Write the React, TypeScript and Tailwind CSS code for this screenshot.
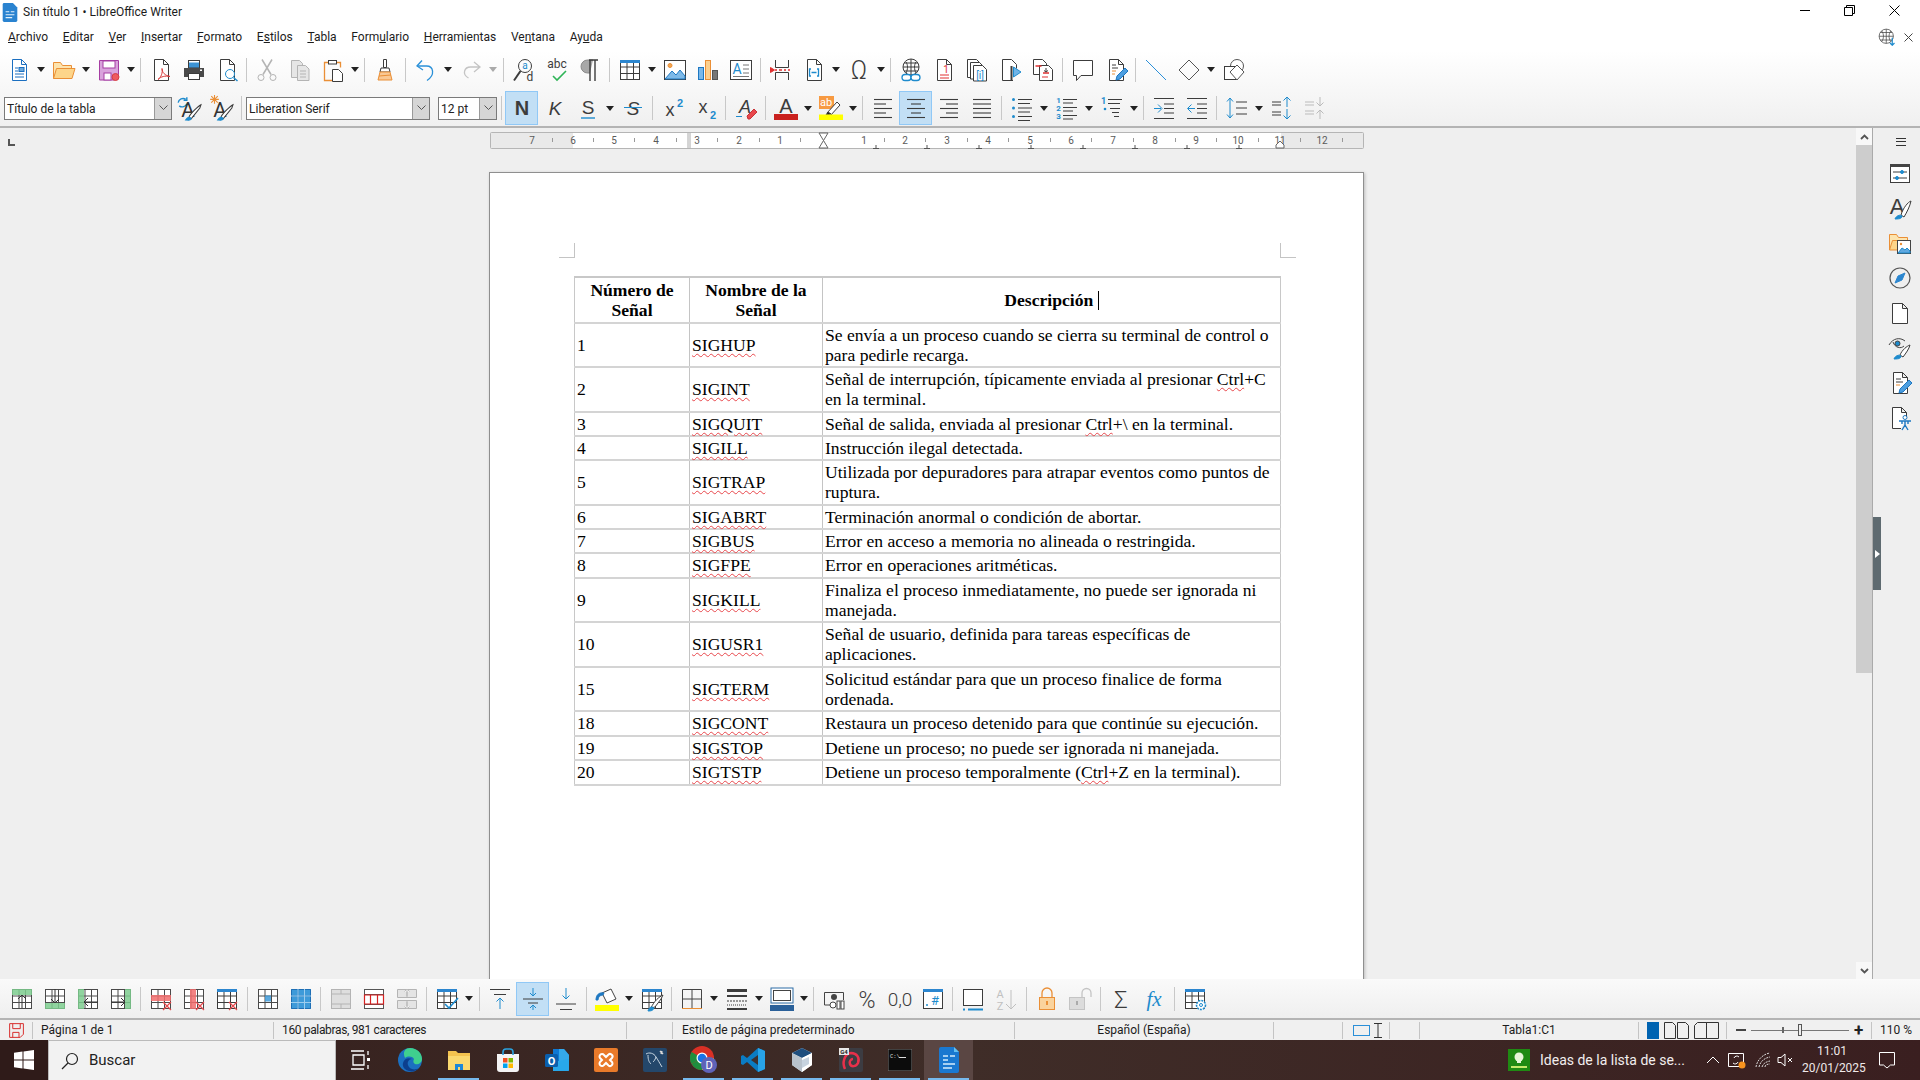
import React from 'react';

const D = '#3c3c3c';
const BL = '#1e8bcd';
const OR = '#ea8f36';
const RD = '#e8474c';
const GY = '#b4b4b4';

type P = { children?: React.ReactNode; s?: number };

const Svg = ({ children, s = 24 }: P) => (
  <svg width={s} height={s} viewBox="0 0 24 24" fill="none" stroke={D} strokeWidth="1" className="shrink-0 overflow-visible">
    {children}
  </svg>
);

const Tx = ({ x, y, z, c = D, b, i, w, f = 'Roboto', children }: { x: number; y: number; z: number; c?: string; b?: boolean; i?: boolean; w?: number; f?: string; children: React.ReactNode }) => (
  <text x={x} y={y} fontSize={z} fill={c} stroke="none" fontWeight={w ?? (b ? 700 : 400)} fontStyle={i ? 'italic' : 'normal'} fontFamily={f} textAnchor="middle">
    {children}
  </text>
);

const Doc = ({ c = D }: { c?: string }) => <path d="M5.5 1.5h9l5 5v16h-14zM14.5 1.5v5h5" stroke={c} fill="#fff" />;

const Btn = ({ children, on }: { children: React.ReactNode; on?: boolean }) => (
  <div className={`w-[33px] h-[34px] shrink-0 flex items-center justify-center ${on ? 'bg-[#c2dff5] border border-[#90c8f6]' : ''}`}>{children}</div>
);
const Arrow = ({ off }: { off?: boolean }) => (
  <div className="w-[12px] shrink-0 flex justify-center">
    <div className={`w-0 h-0 border-l-[4px] border-r-[4px] border-t-[5px] border-l-transparent border-r-transparent ${off ? 'border-t-[#aaa]' : 'border-t-[#222]'}`} />
  </div>
);
const Sep = ({ w = 'w-[7px]' }: { w?: string }) => (
  <div className={`${w} shrink-0 flex justify-center`}>
    <div className="w-px h-[24px] bg-[#c8c8c8]" />
  </div>
);

// toolbar one
const NewDoc = () => (
  <Svg>
    <Doc c="#1b6fc0" />
    <path d="M8 10h3M8 13h3M8 16h9M8 19h9" stroke="#1b6fc0" />
    <rect x="12" y="9.5" width="5" height="4" fill="#6aa9dd" stroke="#1b6fc0" />
  </Svg>
);
const Open = () => (
  <Svg>
    <path d="M1.5 20.5V4.5h7l2 3h9v3" stroke={OR} fill="#fde4ae" />
    <path d="M1.5 20.5l3-10h18.500l-3 10z" stroke={OR} fill="#fdd58a" />
  </Svg>
);
const Save = () => (
  <Svg>
    <path d="M2.500 2.500h19v14l-4 5.500h-15z" fill="#d9a3dc" stroke="#a63ea3" />
    <rect x="6" y="3" width="12" height="7" fill="#fff" stroke="#a63ea3" />
    <rect x="7" y="15" width="7" height="7" fill="#fff" stroke="#a63ea3" />
    <circle cx="18.500" cy="19" r="3.500" fill="#ee5a5f" stroke="#d63d42" />
  </Svg>
);
const Pdf = () => (
  <Svg>
    <Doc />
    <path d="M9 21.500c3-2 5-7 4-11 0 4 3 7 8 8-5-1-9 0-12 3z" stroke="#d93b3b" fill="#fff" />
  </Svg>
);
const Print = () => (
  <Svg>
    <rect x="6.500" y="2.500" width="11" height="7" fill="#fff" stroke={D} />
    <path d="M7 4.500h10v5H7z" fill="#3c93d4" stroke="none" />
    <path d="M2 10h20v9H2z" fill="#4a4a4a" stroke="none" />
    <rect x="6.500" y="15.500" width="11" height="6" fill="#fff" stroke={D} />
    <rect x="18" y="11.500" width="2" height="1.500" fill="#fff" stroke="none" />
  </Svg>
);
const Preview = () => (
  <Svg>
    <Doc />
    <circle cx="15" cy="16" r="4.500" fill="#fff" stroke={BL} />
    <path d="M18.500 19.500l4 3.500" stroke={BL} strokeWidth="1.500" />
  </Svg>
);
const Cut = () => (
  <Svg>
    <path d="M7 1.500l9 15M17 1.500l-9 15" stroke={GY} strokeWidth="1.500" />
    <circle cx="6" cy="19.500" r="3" stroke={GY} />
    <circle cx="18" cy="19.500" r="3" stroke={GY} />
  </Svg>
);
const Copy = () => (
  <Svg>
    <path d="M3.500 2.500h8l3 3v14h-11z" fill="#e6e6e6" stroke={GY} />
    <path d="M9.500 7.500h8l3.500 3.500v11.500h-11.500z" fill="#e6e6e6" stroke={GY} />
    <path d="M12 13h6M12 16h6M12 19h6" stroke={GY} />
  </Svg>
);
const Paste = () => (
  <Svg>
    <path d="M7 4.500H3.500v18h8M16 4.500h3.500v5" stroke={OR} strokeWidth="1.300" />
    <rect x="7.500" y="2.500" width="8" height="3.500" stroke={D} fill="#fff" />
    <path d="M11.500 11.500h6l4 4v8h-10z" stroke={D} fill="#fff" />
  </Svg>
);
const Clone = () => (
  <Svg>
    <path d="M10.500 1.500h3v8h-3zM8 10h8l1 4H7z" fill="#fff" stroke={D} />
    <path d="M7 14h10l2 8H5z" fill="#f9c894" stroke={OR} />
    <path d="M6 18l12-1" stroke={OR} />
  </Svg>
);
const Undo = ({ c = '#2a90d8' }: { c?: string }) => (
  <Svg>
    <path d="M8 2.500L3 8l6 4" stroke={c} strokeWidth="1.300" />
    <path d="M3.500 8h9c7 0 9 9 .5 14.500" stroke={c} strokeWidth="1.300" />
  </Svg>
);
const Redo = () => (
  <svg width="24" height="24" viewBox="0 0 24 24" fill="none" className="-scale-x-100 shrink-0">
    <path d="M9 4L3 9l6 5M3.500 9h9c6 0 9 7 2 11" stroke="#c4c4c4" strokeWidth="1.300" />
  </svg>
);
const Find = () => (
  <Svg>
    <circle cx="13" cy="8" r="6.500" />
    <path d="M8.500 13L2 22.500" strokeWidth="2" />
    <Tx x={13} y={11} z={10} c={BL}>a</Tx>
    <Tx x={18} y={23} z={12}>d</Tx>
  </Svg>
);
const Abc = () => (
  <Svg>
    <Tx x={12} y={10} z={12}>abc</Tx>
    <path d="M8 18l4 4 9-9" stroke="#2fb457" strokeWidth="1.600" />
  </Svg>
);
const Pilcrow = () => (
  <Svg>
    <path d="M15 2H9.500a6 6 0 000 13H12" fill="#a8a8a8" stroke="#8a8a8a" />
    <path d="M12 2v21M17 2v21M11 2h9" strokeWidth="1.400" />
  </Svg>
);
const Grid = ({ head = true, c = D }: { head?: boolean; c?: string }) => (
  <>
    <rect x="2.500" y="2.500" width="19" height="19" stroke={c} fill="#fff" />
    <path d="M2.500 9h19M2.500 15.500h19M9 2.500v19M15.500 2.500v19" stroke={c} />
    {head && <rect x="2" y="2" width="20" height="3" fill="#2c86cf" stroke="none" />}
  </>
);
const TableI = () => <Svg><Grid /></Svg>;
const ImageI = () => (
  <Svg>
    <rect x="1.500" y="2.500" width="21" height="19" fill="#fff" />
    <circle cx="7" cy="7.500" r="2" fill="#f5a650" stroke={OR} />
    <path d="M2 21l7-8 4 4 4-5 5 6v3z" fill="#7db9e8" stroke="#1e78c2" />
  </Svg>
);
const Chart = () => (
  <Svg>
    <rect x="2.500" y="9.500" width="5" height="12" fill="#79b8ea" stroke="#1e78c2" />
    <rect x="9.500" y="2.500" width="5" height="19" fill="#fcd08f" stroke={OR} />
    <rect x="16.500" y="12.500" width="5" height="9" fill="#777" stroke="#555" />
  </Svg>
);
const TextBox = () => (
  <Svg>
    <rect x="1.500" y="2.500" width="21" height="19" fill="#fff" />
    <Tx x={8} y={16} z={14} c={BL}>A</Tx>
    <path d="M14 7h6M14 11h6M14 15h6M4 18.500h16" stroke="#777" />
  </Svg>
);
const PageBreak = () => (
  <Svg>
    <path d="M6.500 2v7.500h13V2M6.500 22v-7.500h13V22" />
    <path d="M6 12h2M10 12h3M15 12h2M19 12h2" stroke="#e03131" strokeWidth="1.400" />
    <path d="M1.500 9.500l4 2.500-4 2.500z" fill="#e03131" stroke="#e03131" />
  </Svg>
);
const Field = () => (
  <Svg>
    <Doc />
    <path d="M9 11H7.500v7H9M15 11h1.500v7H15" stroke={BL} strokeWidth="1.300" />
    <path d="M9.500 14.500h5" stroke={BL} strokeWidth="1.500" />
  </Svg>
);
const Omega = () => <Svg><Tx x={12} y={21} z={25} w={300}>Ω</Tx></Svg>;
const Link = () => (
  <Svg>
    <circle cx="12" cy="9" r="8" />
    <path d="M4 9h16M12 1v16M7 4c2 3 2 7 0 11M17 4c-2 3-2 7 0 11M5 5h14M5 13h14" />
    <rect x="3" y="16.500" width="9" height="6" rx="3" fill="#fff" stroke={BL} strokeWidth="1.300" />
    <rect x="12" y="16.500" width="9" height="6" rx="3" fill="#fff" stroke={BL} strokeWidth="1.300" />
  </Svg>
);
const Footnote = () => (
  <Svg>
    <Doc />
    <Tx x={14} y={15} z={10} c="#e03131">1</Tx>
    <path d="M8 17h9M8 20h9" stroke="#e03131" />
  </Svg>
);
const Endnote = () => (
  <Svg>
    <path d="M2.500 1.500h9l3 3v15h-12z" fill="#fff" />
    <path d="M5.500 4.500h9l3 3v13.500h-12z" fill="#fff" />
    <path d="M8.500 7.500h9l4 4v11.500h-13z" fill="#fff" />
    <Tx x={15} y={21} z={10} c={BL}>[i]</Tx>
  </Svg>
);
const Bookmark = () => (
  <Svg>
    <path d="M15 22.500H4.500v-21h9l5 5v4" fill="#fff" />
    <path d="M13.500 8v15" strokeWidth="2" />
    <path d="M15.500 9l7.500 5-7.500 5z" fill="#6fb4e8" stroke={BL} />
  </Svg>
);
const CrossRef = () => (
  <Svg>
    <path d="M2.500 1.500h9l4 4v11h-13z" fill="#fff" />
    <path d="M8.500 7.500h9l4 4v11h-13z" fill="#fff" />
    <path d="M4.500 8h6M12 15h6" stroke="#e03131" strokeWidth="1.300" />
    <path d="M15 10v4l-2-1.500M15 14l2-1.500" />
    <path d="M11 19h6" stroke="#e03131" />
  </Svg>
);
const Comment = () => (
  <Svg>
    <path d="M2.500 2.500h19v15H10l-4.500 5v-5h-3z" fill="#fff" />
  </Svg>
);
const Track = () => (
  <Svg>
    <Doc />
    <path d="M8 7h4M8 10h6" />
    <path d="M8 13h4M8 16h3" stroke={OR} />
    <path d="M12 22l1-4 8-8 3 3-8 8z" fill="#4c9ee0" stroke="#1e78c2" />
  </Svg>
);
const LineI = () => <Svg><path d="M2 2l20 20" stroke="#2a8fd8" /></Svg>;
const Diamond = () => <Svg><path d="M12 2l10 10-10 10L2 12z" stroke="#555" /></Svg>;
const Shapes = () => (
  <Svg>
    <circle cx="15" cy="8" r="6.500" fill="#fff" stroke="#555" />
    <rect x="2.500" y="8.500" width="12" height="13" fill="#fff" />
    <path d="M15 7l7 7-7 8-7-8z" fill="#fff" stroke="#555" />
  </Svg>
);

// toolbar two
const StyleA = ({ star }: { star?: boolean }) => (
  <Svg s={26}>
    {star ? (
      <path d="M6 0v8M2 4h8M3 1l6 6M9 1L3 7" stroke={OR} />
    ) : (
      <path d="M2 7a4.500 4.500 0 017-3M10 2v3H7M10 8a4.500 4.500 0 01-7 2" stroke={BL} strokeWidth="1.300" />
    )}
    <Tx x={11} y={20} z={19} c="#333">A</Tx>
    <path d="M12 21c0-3 9-11 11-12l-1 3-8 10z" fill="#fff" />
    <path d="M9 23c2-3 4-3 5-1-1 2-3 1-5 1z" fill={BL} stroke={BL} />
  </Svg>
);
const Combo = ({ w, text }: { w: string; text: string }) => (
  <div className={`${w} h-[23px] border border-[#7a7a7a] bg-white flex items-center shrink-0`}>
    <span className="flex-1 pl-[2px] pt-[1px] text-[12px] text-[#222] whitespace-nowrap overflow-hidden">{text}</span>
    <div className="w-[17px] h-full bg-[#d6d6d6] border-l border-[#9a9a9a] flex items-center justify-center">
      <svg width="9" height="6" viewBox="0 0 9 6" fill="none" stroke="#555"><path d="M.5.5l4 4 4-4" /></svg>
    </div>
  </div>
);
const Bold = () => <Svg><Tx x={12} y={19} z={20} b f="Liberation Sans">N</Tx></Svg>;
const Ital = () => <Svg><Tx x={12} y={19} z={19} i f="Liberation Sans">K</Tx></Svg>;
const Under = () => (
  <Svg>
    <Tx x={12} y={18} z={19} f="Liberation Sans">S</Tx>
    <path d="M5 22h14" stroke={BL} strokeWidth="1.400" />
  </Svg>
);
const Strike = () => (
  <Svg>
    <Tx x={12} y={19} z={19} i f="Liberation Sans">S</Tx>
    <path d="M3 11.500h18" stroke={BL} />
  </Svg>
);
const Sup = () => (
  <Svg>
    <Tx x={9} y={20} z={18} f="Liberation Sans">x</Tx>
    <Tx x={19} y={11} z={11} c={BL} b f="Liberation Sans">2</Tx>
  </Svg>
);
const Sub = () => (
  <Svg>
    <Tx x={9} y={17} z={18} f="Liberation Sans">x</Tx>
    <Tx x={19} y={23} z={11} c={BL} b f="Liberation Sans">2</Tx>
  </Svg>
);
const Clear = () => (
  <Svg>
    <Tx x={11} y={17} z={18} i f="Liberation Sans">A</Tx>
    <path d="M2 20.500h6" stroke={BL} />
    <path d="M13 20l7-7 3 3-7 7h-2z" fill={RD} stroke="#c93236" />
  </Svg>
);
const FontColor = () => (
  <Svg>
    <Tx x={12} y={17} z={20} f="Liberation Sans">A</Tx>
    <rect x="0" y="18" width="24" height="6" fill="#c9211e" stroke="none" />
  </Svg>
);
const Highlight = () => (
  <Svg>
    <rect x="0" y="0" width="15" height="13" fill="#f79a42" stroke="none" />
    <Tx x={7} y={10} z={11} c="#fff">ab</Tx>
    <path d="M8 17l10-11 3 3-10 11z" fill="#fff" />
    <path d="M7 19l2-3 3 2z" fill="#222" />
    <rect x="0" y="18.500" width="24" height="5.500" fill="#ffff00" stroke="none" />
  </Svg>
);
const Lines = ({ l, c = D }: { l: [number, number, number][]; c?: string }) => (
  <Svg>
    {l.map(([a, b, y]) => (
      <path key={`${a}${b}${y}`} d={`M${a} ${y}H${b}`} stroke={c} strokeWidth="1.100" />
    ))}
  </Svg>
);
const AlignL = () => <Lines l={[[3, 21, 3.5], [3, 15, 8], [3, 21, 12.5], [3, 15, 17], [3, 21, 21.5]]} />;
const AlignC = () => <Lines l={[[3, 21, 3.5], [7, 17, 8], [3, 21, 12.5], [7, 17, 17], [3, 21, 21.5]]} />;
const AlignR = () => <Lines l={[[3, 21, 3.5], [9, 21, 8], [3, 21, 12.5], [9, 21, 17], [3, 21, 21.5]]} />;
const AlignJ = () => <Lines l={[[3, 21, 3.5], [3, 21, 8], [3, 21, 12.5], [3, 21, 17], [3, 21, 21.5]]} />;
const Bullets = () => (
  <Svg>
    {[3.5, 12, 20.5].map((y) => (
      <g key={y}>
        <circle cx="3.500" cy={y} r="1.500" fill={BL} stroke="none" />
        <path d={`M8 ${y}H22M8 ${y + 4}H20`} />
      </g>
    ))}
  </Svg>
);
const Numbers = () => (
  <Svg>
    {['1', '2', '3'].map((n, i) => (
      <g key={n}>
        <Tx x={3.5} y={7 + i * 8} z={8} c={BL} b>{n}</Tx>
        <path d={`M8 ${3.5 + i * 8}H22M8 ${7 + i * 8}H18`} />
      </g>
    ))}
  </Svg>
);
const Outline = () => (
  <Svg>
    <Tx x={3.5} y={8} z={9} c={BL} b>1</Tx>
    <circle cx="5" cy="13" r="1.300" fill={BL} stroke="none" />
    <path d="M8 3.500H22M8 7.500H20M10 12.500H20M12 16.500H19M14 20.500H19" />
  </Svg>
);
const Indent = () => (
  <Svg>
    <path d="M2 2.500h20M2 22.500h20M12 8h10M12 12.500h10M12 17h10" />
    <path d="M2 12.500h7M6 8.500l4 4-4 4" stroke={BL} />
  </Svg>
);
const Outdent = () => (
  <Svg>
    <path d="M2 2.500h20M2 22.500h20M12 8h10M12 12.500h10M12 17h10" />
    <path d="M10 12.500H3M6.500 8.500l-4 4 4 4" stroke={BL} />
  </Svg>
);
const Spacing = () => (
  <Svg>
    <path d="M5 2v20M2 5.500L5 2l3 3.500M2 18.500L5 22l3-3.500" stroke={BL} />
    <path d="M11 6h11M11 12h11M11 18h11" />
  </Svg>
);
const IncSp = ({ c = D, a = BL }: { c?: string; a?: string }) => (
  <Svg>
    <path d="M2 6h9M2 9h9M2 16h9M2 19h9" stroke={c} />
    <path d="M17 11V1M13.500 4.500L17 1l3.500 3.500M17 13v10M13.500 19.500L17 23l3.500-3.500" stroke={a} />
  </Svg>
);
const DecSp = () => (
  <Svg>
    <path d="M2 6h9M2 9h9M2 15h9M2 18h9" stroke="#bbb" />
    <path d="M17 10V1M13.500 6.500L17 10l3.500-3.500M17 14v9M13.500 17.500L17 14l3.500 3.500" stroke="#bbb" />
  </Svg>
);

// table toolbar
const GridIn = ({ fill, x, y, w, h, children }: { fill: string; x: number; y: number; w: number; h: number; children?: React.ReactNode }) => (
  <Svg>
    <rect x="2" y="2" width="20" height="20" fill="#fff" stroke="none" />
    <Grid head={false} c="#4a4a4a" />
    <rect x={x} y={y} width={w} height={h} fill={fill} fillOpacity="0.85" stroke="none" />
    {children}
  </Svg>
);
const X = () => <path d="M14 15l8 8M22 15l-8 8" stroke={RD} strokeWidth="1.200" />;
const RowsAbove = () => <GridIn fill="#7ccc8e" x={2} y={2} w={20} h={6}><path d="M12 21V8M8 12l4-4 4 4" stroke="#333" /></GridIn>;
const RowsBelow = () => <GridIn fill="#7ccc8e" x={2} y={16} w={20} h={6}><path d="M12 2v14M8 12l4 4 4-4" stroke="#333" /></GridIn>;
const ColsLeft = () => <GridIn fill="#7ccc8e" x={2} y={2} w={6} h={20}><path d="M22 15H8M12 11l-4 4 4 4" stroke="#333" /></GridIn>;
const ColsRight = () => <GridIn fill="#7ccc8e" x={16} y={2} w={6} h={20}><path d="M2 15h14M12 11l4 4-4 4" stroke="#333" /></GridIn>;
const DelRow = () => <GridIn fill="#f26d6d" x={2} y={8} w={20} h={6}><X /></GridIn>;
const DelCol = () => <GridIn fill="#f26d6d" x={8} y={2} w={6} h={20}><X /></GridIn>;
const DelTab = () => <Svg><Grid /><X /></Svg>;
const SelCell = () => <GridIn fill="#3d9ad9" x={9} y={8.5} w={6} h={6} />;
const SelAll = () => (
  <Svg>
    <rect x="2" y="2" width="20" height="20" fill="#3d9ad9" stroke="none" />
    <path d="M2.500 2.500h19v19h-19zM2.500 9h19M2.500 15.500h19M9 2.500v19M15.500 2.500v19" stroke="#1f6fb5" />
    <path d="M2 9h20M2 15.500h20M9 2v20M15.500 2v20" stroke="#9ccdee" />
  </Svg>
);
const Merge = () => (
  <Svg>
    <rect x="2.500" y="2.500" width="19" height="19" fill="#dedede" stroke={GY} />
    <path d="M2.500 7h19M2.500 17h19M12 2.500V7M12 17v4.500" stroke={GY} />
  </Svg>
);
const SplitT = () => (
  <Svg>
    <rect x="2.500" y="2.500" width="19" height="19" fill="#fff" stroke="#555" />
    <path d="M2.500 7.500h19M2.500 17.500h19" stroke="#555" />
    <path d="M2.500 8h19v9h-19zM8.500 8v9M15.500 8v9" stroke="#d82020" strokeWidth="1.200" />
  </Svg>
);
const SplitTab = () => (
  <Svg>
    <path d="M2.500 2.500h19v8h-19zM2.500 13.500h19v8h-19zM12 2.500v8M12 13.500v8" stroke={GY} fill="#e4e4e4" />
    <path d="M12 9V2M9.500 4.500L12 2l2.500 2.500M12 15v7M9.500 19.500L12 22l2.500-2.500" stroke="#bbb" fill="#fff" />
  </Svg>
);
const Autofmt = () => (
  <Svg>
    <Grid />
    <path d="M10 17l4 4 9-10" stroke={BL} strokeWidth="1.600" />
  </Svg>
);
const VTop = () => (
  <Svg>
    <path d="M2 2.500h20M6 7.500h12" />
    <path d="M12 22V11M8.500 14.500L12 11l3.500 3.500" stroke={BL} />
  </Svg>
);
const VMid = () => (
  <Svg>
    <path d="M2 12h20M7 16h10" />
    <path d="M12 1v8M9 6l3 3 3-3M12 23v-5M9 21l3-3 3 3" stroke={BL} />
  </Svg>
);
const VBot = () => (
  <Svg>
    <path d="M2 17h20M6 22.500h12" />
    <path d="M12 1v11M8.500 8.500L12 12l3.500-3.500" stroke={BL} />
  </Svg>
);
const Bucket = () => (
  <Svg>
    <path d="M7 6l9-4 5 10-9 4z" fill="#fff" stroke="#444" />
    <path d="M1 13c0-5 3-8 8-7l-1 2C5 8 3 10 3 13z" fill="#1e78c2" stroke="#1e78c2" />
    <rect x="0" y="18" width="24" height="6" fill="#ffff00" stroke="none" />
  </Svg>
);
const TabStyle = () => (
  <Svg>
    <Grid />
    <path d="M11 21c3-7 8-11 12-13l-2 4-6 8z" fill="#fff" />
    <path d="M8 24c1-4 4-5 6-3-1 3-4 3-6 3z" fill={BL} stroke={BL} />
  </Svg>
);
const Borders = () => (
  <Svg>
    <path d="M2.500 2.500h19v19M12 2.500v19M2.500 12h19M2.500 2.500v19" stroke="#444" />
    <path d="M2 21.500h20" stroke={OR} />
  </Svg>
);
const BorderSt = () => (
  <Svg>
    <path d="M2 3.500h20" strokeWidth="3" />
    <path d="M2 9h20" strokeWidth="2" />
    <path d="M2 14h20" strokeDasharray="2 1" />
    <path d="M2 18h20" strokeDasharray="1 1" />
    <path d="M2 22h20" strokeWidth="2" />
  </Svg>
);
const BorderCol = () => (
  <Svg>
    <rect x="1" y="1" width="22" height="15" fill="#fff" stroke="#2c6ca6" />
    <rect x="3.500" y="3.500" width="17" height="10" fill="#fff" stroke="#444" />
    <rect x="0" y="18" width="24" height="6" fill="#2a6099" stroke="none" />
  </Svg>
);
const Currency = () => (
  <Svg>
    <path d="M8 18H2.500V5.500h19V13" stroke="#444" />
    <circle cx="12" cy="10" r="3" fill="#444" stroke="none" />
    <circle cx="11" cy="18" r="3" fill="#fff" stroke="#444" />
    <rect x="15" y="14" width="3" height="8" fill="#fff" stroke="#444" />
    <rect x="19" y="14" width="3" height="8" fill="#fff" stroke="#444" />
  </Svg>
);
const Percent = () => <Svg><Tx x={12} y={21} z={23} w={300}>%</Tx></Svg>;
const Decimal = () => <Svg><Tx x={12} y={19} z={19} w={300}>0,0</Tx></Svg>;
const NumFmt = () => (
  <Svg>
    <rect x="2.500" y="2.500" width="19" height="19" fill="#fff" />
    <rect x="2" y="2" width="20" height="3" fill="#2c86cf" stroke="none" />
    <Tx x={14} y={18} z={13} c={BL}>#</Tx>
    <circle cx="6" cy="18" r="1" fill={BL} stroke="none" />
  </Svg>
);
const Caption = () => (
  <Svg>
    <rect x="2.500" y="2.500" width="19" height="16" fill="#fff" />
    <path d="M2 22.500h2M7 22.500h15" stroke={BL} strokeWidth="2" />
  </Svg>
);
const Sort = () => (
  <Svg>
    <Tx x={6} y={11} z={11} c="#c0c0c0">A</Tx>
    <Tx x={6} y={23} z={11} c="#c0c0c0">Z</Tx>
    <path d="M17 3v19M12 17l5 5 5-5" stroke="#c0c0c0" />
  </Svg>
);
const Lock = () => (
  <Svg>
    <path d="M7 11V6a5 5 0 0110 0v5" stroke={OR} strokeWidth="1.300" />
    <rect x="4.500" y="10.500" width="15" height="12" fill="#fad39d" stroke={OR} />
    <path d="M12 14v4" stroke={OR} strokeWidth="2" />
  </Svg>
);
const Unlock = () => (
  <Svg>
    <path d="M14 10V6a4.500 4.500 0 019 0v4" stroke="#c4c4c4" strokeWidth="1.300" />
    <rect x="1.500" y="10.500" width="15" height="12" fill="#dcdcdc" stroke="#c4c4c4" />
    <path d="M9 14v4" stroke="#aaa" strokeWidth="2" />
  </Svg>
);
const Sigma = () => <Svg><Tx x={12} y={21} z={24} w={300}>Σ</Tx></Svg>;
const Fx = () => <Svg><Tx x={12} y={19} z={21} c={BL} i f="Liberation Serif">fx</Tx></Svg>;
const TabProps = () => (
  <Svg>
    <Grid />
    <circle cx="18" cy="18" r="4.500" fill="#fff" stroke={BL} strokeDasharray="2 1" strokeWidth="1.600" />
    <circle cx="18" cy="18" r="1.500" stroke={BL} />
  </Svg>
);

// sidebar
const SideProps = () => (
  <Svg>
    <rect x="2.500" y="3.500" width="19" height="18" fill="#fff" />
    <rect x="2" y="3" width="20" height="3" fill="#444" stroke="none" />
    <path d="M5 11h14M5 17h14" />
    <circle cx="14" cy="11" r="1.500" fill={BL} stroke={BL} />
    <circle cx="9" cy="17" r="1.500" fill={BL} stroke={BL} />
  </Svg>
);
const SideStyles = () => (
  <Svg>
    <Tx x={9} y={18} z={22} f="Liberation Sans">A</Tx>
    <path d="M13 19c2-7 7-13 10-14-1 5-4 11-7 16z" fill="#fff" />
    <path d="M7 23c1-3 5-5 7-3 0 3-4 3-7 3z" fill={BL} stroke={BL} />
  </Svg>
);
const SideGallery = () => (
  <Svg>
    <path d="M1.500 19V3.500h7l2 3h9v3" stroke={OR} fill="#fde4ae" />
    <path d="M1.500 19l3-9.500h18l-3 9.500z" stroke={OR} fill="#fdd58a" />
    <rect x="9.500" y="9.500" width="13" height="13" fill="#fff" stroke="#444" />
    <circle cx="13" cy="13" r="1.200" fill={OR} stroke="none" />
    <path d="M10 22l4-5 3 2 2-2 3 3v2z" fill="#5fa8e0" stroke={BL} />
  </Svg>
);
const SideNav = () => (
  <Svg>
    <circle cx="12" cy="12" r="10" stroke="#555" strokeWidth="1.200" />
    <path d="M17 7l-3 7-7 3 3-7z" fill="#2c86cf" stroke="#2c86cf" />
  </Svg>
);
const SidePage = () => <Svg><path d="M4.500 2.500h10l5 5v15h-15zM14.500 2.500v5h5" fill="#fff" /></Svg>;
const SideEye = () => (
  <Svg>
    <path d="M1 9c4-7 11-8 16-4M5 6c2 6 8 7 11 4" stroke="#444" />
    <circle cx="9.500" cy="7.500" r="2.500" fill={BL} stroke="#444" />
    <path d="M12 19c2-5 7-9 10-10-1 4-4 8-7 12z" fill="#fff" />
    <path d="M6 23c1-3 5-5 7-3 0 3-4 3-7 3z" fill={BL} stroke={BL} />
  </Svg>
);
const SideCheck = () => <Svg><Doc /><path d="M8 8h5M8 11h7" /><path d="M8 14h4" stroke={OR} /><path d="M11 22l1-4 9-9 3 3-9 9z" fill="#4c9ee0" stroke="#1e78c2" /></Svg>;
const SideAcc = () => (
  <Svg>
    <path d="M13 22.500H4.500v-21h9l5 5v4M13.500 1.500v5h5" fill="#fff" />
    <circle cx="17" cy="11.500" r="2" stroke="#1e78c2" />
    <path d="M11 15h12M17 15v4l-3 5M17 19l3 5M14 15v3M20 15v3" stroke="#1e78c2" strokeWidth="1.400" />
  </Svg>
);

// taskbar
const WinLogo = () => (
  <svg width="20" height="20" viewBox="0 0 20 20" fill="#fff"><path d="M0 2.800L8.500 1.600v8H0zM9.500 1.500L20 0v9.600H9.500zM0 10.500h8.500v8L0 17.300zM9.500 10.500H20V20L9.500 18.500z" /></svg>
);
const TaskI = ({ children, on, bar = true }: { children: React.ReactNode; on?: boolean; bar?: boolean }) => (
  <div className={`w-[49px] h-full shrink-0 flex items-center justify-center relative ${on ? 'bg-[#5a4643]' : ''}`}>
    {children}
    {bar && <div className="absolute bottom-0 left-[4px] right-[4px] h-[2px] bg-[#76b9ed]" />}
  </div>
);
const TaskView = () => (
  <svg width="22" height="20" viewBox="0 0 22 20" fill="none" stroke="#fff" strokeWidth="1.300">
    <path d="M1 1h13M1 19h13M3 5h11v10H3zM18 1v4M18 15v4" />
    <rect x="17" y="8" width="3" height="3" fill="#fff" stroke="none" />
  </svg>
);
const Edge = () => (
  <svg width="24" height="24" viewBox="0 0 24 24">
    <circle cx="12" cy="12" r="12" fill="#1b6fc0" />
    <path d="M12 0c7 0 12 5 12 11 0 4-4 6-7 5-2-1-2-3-1-5-2-3-6-3-9-1C4 3 8 0 12 0z" fill="#3fcf8e" />
    <path d="M5 15c1-4 5-6 9-4-3 0-5 3-4 6 1 4 6 6 11 3-3 3-7 4-10 3-4-1-7-4-6-8z" fill="#0c3f8e" />
  </svg>
);
const Explorer = () => (
  <svg width="22" height="22" viewBox="0 0 22 22">
    <path d="M0 2h8l2 2h12v17H0z" fill="#f4c34f" />
    <path d="M0 7h22v14H0z" fill="#fbd96f" />
    <path d="M7 21v-6h8v6h-3v-3h-2v3z" fill="#1e88d8" />
  </svg>
);
const Store = () => (
  <svg width="24" height="24" viewBox="0 0 24 24">
    <path d="M1 6h22v15a3 3 0 01-3 3H4a3 3 0 01-3-3z" fill="#f4f4f4" />
    <path d="M7 7V4a3 3 0 013-3h4a3 3 0 013 3v3" fill="none" stroke="#2aa3e0" strokeWidth="1.600" />
    <rect x="7" y="10" width="4.500" height="4.500" fill="#f25022" />
    <rect x="12.500" y="10" width="4.500" height="4.500" fill="#7fba00" />
    <rect x="7" y="15.500" width="4.500" height="4.500" fill="#00a4ef" />
    <rect x="12.500" y="15.500" width="4.500" height="4.500" fill="#ffb900" />
  </svg>
);
const Outlook = () => (
  <svg width="24" height="24" viewBox="0 0 24 24">
    <path d="M8 1h11l5 6v15a1 1 0 01-1 1H8z" fill="#0f78d4" />
    <path d="M14 1h5l5 6v6H14z" fill="#35a8ea" />
    <path d="M8 14l16-3v11a1 1 0 01-1 1H8z" fill="#28a8ea" />
    <rect x="0" y="6" width="13" height="13" rx="1.500" fill="#0a5fad" />
    <text x="6.500" y="16.500" fontSize="11" fontWeight="700" fill="#fff" textAnchor="middle" fontFamily="Roboto">O</text>
  </svg>
);
const Xampp = () => (
  <svg width="24" height="24" viewBox="0 0 24 24">
    <rect width="24" height="24" rx="2" fill="#e97a2a" />
    <path d="M8 6a2.500 2.500 0 00-2 4l2 2-2 2a2.500 2.500 0 104 3l2-2 2 2a2.500 2.500 0 104-3l-2-2 2-2a2.500 2.500 0 10-4-3l-2 2-2-2a2.500 2.500 0 00-2-1z" fill="#e97a2a" stroke="#fff" strokeWidth="2" />
  </svg>
);
const Mysql = () => (
  <svg width="24" height="24" viewBox="0 0 24 24" fill="none">
    <rect width="24" height="24" rx="2" fill="#24476b" />
    <path d="M3 6c3-2 8-1 10 3 2 3 3 5 6 10M5 7c0 5 1 7 3 9M13 9c-1 3-2 4-3 5" stroke="#c8d6e2" strokeWidth="1" />
    <path d="M17 3l3 3M19 3l-1 3" stroke="#d8d8d8" strokeWidth="1.500" />
  </svg>
);
const Chrome = () => (
  <svg width="28" height="28" viewBox="0 0 28 28">
    <circle cx="12" cy="12" r="12" fill="#d93025" />
    <path d="M12 12L1.600 18A12 12 0 0012 24z" fill="#1e8e3e" />
    <path d="M12 12v12A12 12 0 0024 12z" fill="#fbbc04" />
    <path d="M12 12L1.600 18A12 12 0 011.600 6z" fill="#1e8e3e" />
    <circle cx="12" cy="12" r="5.500" fill="#fff" />
    <circle cx="12" cy="12" r="4.300" fill="#1a73e8" />
    <circle cx="19" cy="19" r="8" fill="#5f63b8" />
    <text x="19" y="23" fontSize="11" fill="#fff" textAnchor="middle" fontFamily="Roboto">D</text>
  </svg>
);
const VsCode = () => (
  <svg width="24" height="24" viewBox="0 0 24 24">
    <path d="M17 0l7 3v18l-7 3-11-10-4 3-2-1V8l2-1 4 3z" fill="#0a7cc4" />
    <path d="M17 0l7 3v18l-7 3z" fill="#28a3e8" />
    <path d="M17 7l-7 5 7 5z" fill="#3c3030" />
  </svg>
);
const VBox = () => (
  <svg width="24" height="26" viewBox="0 0 24 26">
    <path d="M12 1l10 5v12l-10 7-10-7V6z" fill="#e6e6e6" />
    <path d="M12 1l10 5-10 5L2 6z" fill="#1e4e7e" />
    <path d="M12 11l10-5v12l-10 7z" fill="#fff" />
    <path d="M12 11L2 6v12l10 7z" fill="#b8c2cc" />
    <path d="M12 13l7-3v7l-7 4z" fill="#1e4e7e" opacity="0.25" />
  </svg>
);
const Spiral = () => (
  <svg width="24" height="24" viewBox="0 0 24 24" fill="none">
    <rect width="24" height="24" rx="2" fill="#3c3c42" />
    <path d="M6 21C3 15 5 6 12 5c6 0 9 5 7 10-2 4-7 4-8 1-1-3 1-5 3-5" stroke="#e8304a" strokeWidth="2.500" />
    <rect x="0" y="0" width="10" height="7" fill="#e8e8e8" />
    <text x="5" y="6" fontSize="6" fontWeight="700" fill="#222" textAnchor="middle" fontFamily="Roboto">G4</text>
  </svg>
);
const Cmd = () => (
  <svg width="24" height="22" viewBox="0 0 24 22">
    <rect width="24" height="22" fill="#0c0c0c" stroke="#777" />
    <text x="2" y="9" fontSize="5.500" fill="#ddd" fontFamily="Liberation Mono">C:\</text>
    <path d="M11 8.500h7" stroke="#ddd" />
  </svg>
);
const Writer = () => (
  <svg width="20" height="26" viewBox="0 0 20 26">
    <path d="M2 0h13l5 5v19a2 2 0 01-2 2H2a2 2 0 01-2-2V2a2 2 0 012-2z" fill="#1a78d0" />
    <path d="M15 0l5 5h-5z" fill="#63c0f0" />
    <path d="M4 9h5M11 9h5M4 13h5M4 17h12M4 21h9" stroke="#d5ecfb" strokeWidth="1.400" />
  </svg>
);

const Wave = ({ children }: { children: React.ReactNode }) => (
  <span className="underline decoration-wavy decoration-[#e8474c] decoration-1 underline-offset-2">{children}</span>
);

type Row = { n: string; name: string; h: string; d: React.ReactNode };
const data: Row[] = [
  { n: '1', name: 'SIGHUP', h: 'h-[44px]', d: <>Se envía a un proceso cuando se cierra su terminal de control o<br />para pedirle recarga.</> },
  { n: '2', name: 'SIGINT', h: 'h-[45px]', d: <>Señal de interrupción, típicamente enviada al presionar <Wave>Ctrl</Wave>+C<br />en la terminal.</> },
  { n: '3', name: 'SIGQUIT', h: 'h-[24px]', d: <>Señal de salida, enviada al presionar <Wave>Ctrl</Wave>+\ en la terminal.</> },
  { n: '4', name: 'SIGILL', h: 'h-[24px]', d: 'Instrucción ilegal detectada.' },
  { n: '5', name: 'SIGTRAP', h: 'h-[45px]', d: <>Utilizada por depuradores para atrapar eventos como puntos de<br />ruptura.</> },
  { n: '6', name: 'SIGABRT', h: 'h-[24px]', d: 'Terminación anormal o condición de abortar.' },
  { n: '7', name: 'SIGBUS', h: 'h-[24px]', d: 'Error en acceso a memoria no alineada o restringida.' },
  { n: '8', name: 'SIGFPE', h: 'h-[25px]', d: 'Error en operaciones aritméticas.' },
  { n: '9', name: 'SIGKILL', h: 'h-[44px]', d: <>Finaliza el proceso inmediatamente, no puede ser ignorada ni<br />manejada.</> },
  { n: '10', name: 'SIGUSR1', h: 'h-[45px]', d: <>Señal de usuario, definida para tareas específicas de<br />aplicaciones.</> },
  { n: '15', name: 'SIGTERM', h: 'h-[44px]', d: <>Solicitud estándar para que un proceso finalice de forma<br />ordenada.</> },
  { n: '18', name: 'SIGCONT', h: 'h-[25px]', d: 'Restaura un proceso detenido para que continúe su ejecución.' },
  { n: '19', name: 'SIGSTOP', h: 'h-[24px]', d: 'Detiene un proceso; no puede ser ignorada ni manejada.' },
  { n: '20', name: 'SIGTSTP', h: 'h-[25px]', d: <>Detiene un proceso temporalmente (<Wave>Ctrl</Wave>+Z en la terminal).</> },
];

const Ruler = () => {
  const nums: [string, number][] = [['7', 532], ['6', 573], ['5', 614], ['4', 656], ['3', 697], ['2', 739], ['1', 780], ['1', 864], ['2', 905], ['3', 947], ['4', 988], ['5', 1030], ['6', 1071], ['7', 1113], ['8', 1155], ['9', 1196], ['10', 1238], ['11', 1280], ['12', 1322]];
  const tabs = [876, 927, 979, 1031, 1083, 1135, 1187, 1239];
  return (
    <svg width="874" height="17" viewBox="0 0 874 17" className="block">
      <rect x="0.500" y="0.500" width="873" height="16" fill="#e9e9e9" stroke="#b5b5b5" rx="1" />
      <rect x="83" y="1" width="708" height="15" fill="#fff" />
      {nums.map(([t, x]) => (
        <g key={`${t}${x}`}>
          <text x={x - 490} y="12" fontSize="10" textAnchor="middle" fill="#5a5a5a" fontFamily="Roboto">{t}</text>
          <path d={`M${x - 490 + 20.500} 6v4`} stroke="#999" />
        </g>
      ))}
      {tabs.map((x) => <path key={x} d={`M${x - 490 - 3} 16.500h6M${x - 490} 13v3`} stroke="#555" />)}
      <path d="M198 1v15M200 1v15" stroke="#aaa" />
      <path d="M329 1h9l-4.500 7.500 4.500 7.500h-9l4.500-7.500z" fill="#fff" stroke="#666" />
      <path d="M786 16v-3l4-4 4 4v3z" fill="#fff" stroke="#666" />
    </svg>
  );
};

const menus: [string, string, string][] = [
  ['', 'A', 'rchivo'], ['', 'E', 'ditar'], ['', 'V', 'er'], ['', 'I', 'nsertar'], ['', 'F', 'ormato'], ['E', 's', 'tilos'],
  ['', 'T', 'abla'], ['Form', 'u', 'lario'], ['', 'H', 'erramientas'], ['Ve', 'n', 'tana'], ['Ay', 'u', 'da'],
];

export default function App() {
  return (
    <div className="w-[1920px] h-[1080px] flex flex-col overflow-hidden bg-white text-[12px] text-[#1c1c1c] font-['Roboto',sans-serif]">
      {/* header */}
      <div className="h-[126px] shrink-0 bg-gradient-to-b from-white from-40% to-[#f0f0f0]">
        <div className="h-[24px] flex items-center pl-[2px]">
          <svg width="16" height="19" viewBox="0 0 20 26">
            <path d="M2 0h12l6 6v18a2 2 0 01-2 2H2a2 2 0 01-2-2V2a2 2 0 012-2z" fill="#2a83d0" />
            <path d="M4 12h5M4 16h12M4 20h9M11 12h5" stroke="#e3f1fb" strokeWidth="1.500" />
          </svg>
          <span className="ml-[5px] flex-1">Sin título 1 • LibreOffice Writer</span>
          <div className="flex items-center mb-[4px]">
            <div className="w-[45px] flex justify-center"><div className="w-[10px] h-px bg-black" /></div>
            <div className="w-[45px] flex justify-center">
              <svg width="11" height="11" viewBox="0 0 11 11" fill="none" stroke="#000"><path d="M.5 2.500h8v8h-8zM2.500 2.500v-2h8v8h-2" /></svg>
            </div>
            <div className="w-[45px] flex justify-center">
              <svg width="11" height="11" viewBox="0 0 11 11" fill="none" stroke="#000"><path d="M.5.5l10 10M10.500.5l-10 10" /></svg>
            </div>
            <div className="w-[3px]" />
          </div>
        </div>
        <div className="h-[26px] flex items-center pl-[8px]">
          <div className="flex flex-1 gap-[14.700px]">
            {menus.map(([a, b, c]) => (
              <span key={a + b + c}>{a}<span className="underline">{b}</span>{c}</span>
            ))}
          </div>
          <svg width="18" height="18" viewBox="0 0 24 24" fill="none" stroke="#444">
            <circle cx="11" cy="11" r="9.500" />
            <path d="M1.500 11h19M11 1.500v19M5 4c3 4 3 10 0 14M17 4c-3 4-3 10 0 14M3 6h16M3 16h16" />
            <path d="M19 13v10M16 20l3 3 3-3" stroke={BL} strokeWidth="1.600" />
          </svg>
          <svg width="9" height="9" viewBox="0 0 9 9" fill="none" stroke="#444" className="ml-[8px] mr-[7px]"><path d="M.5.5l8 8M8.500.5l-8 8" /></svg>
        </div>
        <div className="h-[39px] flex items-center pl-[2px]">
          <Btn><NewDoc /></Btn><Arrow /><Btn><Open /></Btn><Arrow /><Btn><Save /></Btn><Arrow /><Sep />
          <Btn><Pdf /></Btn><Btn><Print /></Btn><Btn><Preview /></Btn><Sep />
          <Btn><Cut /></Btn><Btn><Copy /></Btn><Btn><Paste /></Btn><Arrow /><Sep />
          <Btn><Clone /></Btn><Sep w="w-[8px]" />
          <Btn><Undo /></Btn><Arrow /><Btn><Redo /></Btn><Arrow off /><Sep w="w-[8px]" />
          <Btn><Find /></Btn><Btn><Abc /></Btn><Btn><Pilcrow /></Btn><Sep />
          <Btn><TableI /></Btn><Arrow /><Btn><ImageI /></Btn><Btn><Chart /></Btn><Btn><TextBox /></Btn><Sep />
          <Btn><PageBreak /></Btn><Btn><Field /></Btn><Arrow /><Btn><Omega /></Btn><Arrow /><Sep />
          <Btn><Link /></Btn><Btn><Footnote /></Btn><Btn><Endnote /></Btn><Btn><Bookmark /></Btn><Btn><CrossRef /></Btn><Sep />
          <Btn><Comment /></Btn><Btn><Track /></Btn><Sep />
          <Btn><LineI /></Btn><Btn><Diamond /></Btn><Arrow /><Btn><Shapes /></Btn>
        </div>
        <div className="h-[37px] flex items-center pl-[4px] pt-[1px]">
          <Combo w="w-[168px]" text="Título de la tabla" />
          <div className="w-[32px] flex justify-center ml-[1px]"><StyleA /></div>
          <div className="w-[32px] flex justify-center"><StyleA star /></div>
          <Sep w="w-[9px]" />
          <Combo w="w-[184px]" text="Liberation Serif" />
          <div className="w-[8px]" />
          <Combo w="w-[59px]" text="12 pt" />
          <Sep w="w-[8px]" />
          <Btn on><Bold /></Btn><Btn><Ital /></Btn><Btn><Under /></Btn><Arrow /><Btn><Strike /></Btn><Sep />
          <Btn><Sup /></Btn><Btn><Sub /></Btn><Sep />
          <Btn><Clear /></Btn><Sep />
          <Btn><FontColor /></Btn><Arrow /><Btn><Highlight /></Btn><Arrow /><Sep />
          <Btn><AlignL /></Btn><Btn on><AlignC /></Btn><Btn><AlignR /></Btn><Btn><AlignJ /></Btn><Sep />
          <Btn><Bullets /></Btn><Arrow /><Btn><Numbers /></Btn><Arrow /><Btn><Outline /></Btn><Arrow /><Sep />
          <Btn><Indent /></Btn><Btn><Outdent /></Btn><Sep />
          <Btn><Spacing /></Btn><Arrow /><Btn><IncSp /></Btn><Btn><DecSp /></Btn>
        </div>
      </div>
      <div className="h-[2px] shrink-0 bg-[#b4b4b4]" />

      {/* document area */}
      <div className="flex-1 min-h-0 flex bg-[#efefef]">
        <div className="flex-1 min-w-0 overflow-hidden">
          <div className="h-[44px] flex items-start pt-[4px] pl-[8px]">
            <div className="w-[7px] h-[7px] mt-[7px] border-l-2 border-b-2 border-[#555]" />
            <div className="ml-[475px]"><Ruler /></div>
          </div>
          <div className="ml-[489px] w-[875px] h-[900px] bg-white border border-[#8f8f8f] shadow-[1px_1px_3px_#bdbdbd] pl-[84px] pt-[70px]">
            <div className="w-[737px] flex justify-between -ml-[15px]">
              <div className="w-[16px] h-[15px] border-r border-b border-[#c4c4c4]" />
              <div className="w-[16px] h-[15px] border-l border-b border-[#c4c4c4]" />
            </div>
            <table className="mt-[18px] w-[706px] table-fixed border-collapse border-t-2 border-l border-r border-[#c8c8c8] font-['Liberation_Serif',serif] text-[17.6px] leading-[20px] text-black">
              <colgroup>
                <col className="w-[115px]" />
                <col className="w-[133px]" />
                <col className="w-[458px]" />
              </colgroup>
              <thead>
                <tr className="h-[46px] border-b-2 border-[#d4d4d4]">
                  <th className="border-r border-[#c4c4c4] font-bold text-center pb-[1px]">Número de<br />Señal</th>
                  <th className="border-r border-[#c4c4c4] font-bold text-center pb-[1px]">Nombre de la<br />Señal</th>
                  <th className="font-bold text-center pb-[1px]">Descripción <span className="inline-block w-px h-[19px] bg-black align-text-bottom" /></th>
                </tr>
              </thead>
              <tbody>
                {data.map((r) => (
                  <tr key={r.n} className={`${r.h} border-b-2 border-[#d4d4d4]`}>
                    <td className="pl-[2px] pt-0 pb-[1px] border-r border-[#c4c4c4]">{r.n}</td>
                    <td className="pl-[2px] pt-0 pb-[1px] border-r border-[#c4c4c4]"><Wave>{r.name}</Wave></td>
                    <td className="pl-[2px] pt-0 pb-[1px] whitespace-nowrap">{r.d}</td>
                  </tr>
                ))}
              </tbody>
            </table>
          </div>
        </div>
        {/* scrollbar */}
        <div className="w-[16px] shrink-0 flex flex-col">
          <div className="h-[17px] bg-[#f8f8f8] flex items-center justify-center">
            <svg width="9" height="6" viewBox="0 0 9 6" fill="none" stroke="#555" strokeWidth="1.800"><path d="M1 5l3.500-3.500L8 5" /></svg>
          </div>
          <div className="h-[528px] bg-[#cdcdcd]" />
          <div className="flex-1" />
          <div className="h-[17px] bg-[#f8f8f8] flex items-center justify-center">
            <svg width="9" height="6" viewBox="0 0 9 6" fill="none" stroke="#555" strokeWidth="1.800"><path d="M1 1l3.500 3.500L8 1" /></svg>
          </div>
        </div>
        {/* sidebar */}
        <div className="w-[48px] shrink-0 border-l border-[#aaaaaa] pl-[7px] flex flex-col items-center relative">
          <div className="h-[27px] flex items-center pl-[1px]">
            <div className="w-[10px] h-[8px] border-t border-b border-[#333] flex items-center"><div className="w-full h-px bg-[#333]" /></div>
          </div>
          {[SideProps, SideStyles, SideGallery, SideNav, SidePage, SideEye, SideCheck, SideAcc].map((I, k) => (
            <div key={k} className="h-[35px] flex items-center"><I /></div>
          ))}
          <div className="absolute left-0 top-[389px] w-[8px] h-[73px] bg-[#5e6a70] flex items-center justify-center">
            <div className="w-0 h-0 border-t-[4px] border-b-[4px] border-l-[5px] border-t-transparent border-b-transparent border-l-white" />
          </div>
        </div>
      </div>

      {/* table toolbar */}
      <div className="h-[39px] shrink-0 flex items-center pl-[5px] bg-gradient-to-b from-[#fafafa] to-[#efefef]">
        <Btn><RowsAbove /></Btn><Btn><RowsBelow /></Btn><Btn><ColsLeft /></Btn><Btn><ColsRight /></Btn><Sep />
        <Btn><DelRow /></Btn><Btn><DelCol /></Btn><Btn><DelTab /></Btn><Sep w="w-[8px]" />
        <Btn><SelCell /></Btn><Btn><SelAll /></Btn><Sep />
        <Btn><Merge /></Btn><Btn><SplitT /></Btn><Btn><SplitTab /></Btn><Sep />
        <Btn><Autofmt /></Btn><Arrow /><Sep w="w-[8px]" />
        <Btn><VTop /></Btn><Btn on><VMid /></Btn><Btn><VBot /></Btn><Sep w="w-[8px]" />
        <Btn><Bucket /></Btn><Arrow /><Btn><TabStyle /></Btn><Sep />
        <Btn><Borders /></Btn><Arrow /><Btn><BorderSt /></Btn><Arrow /><Btn><BorderCol /></Btn><Arrow /><Sep />
        <Btn><Currency /></Btn><Btn><Percent /></Btn><Btn><Decimal /></Btn><Btn><NumFmt /></Btn><Sep />
        <Btn><Caption /></Btn><Btn><Sort /></Btn><Sep w="w-[8px]" />
        <Btn><Lock /></Btn><Btn><Unlock /></Btn><Sep w="w-[8px]" />
        <Btn><Sigma /></Btn><Btn><Fx /></Btn><Sep w="w-[8px]" />
        <Btn><TabProps /></Btn>
      </div>
      <div className="h-[2px] shrink-0 bg-[#b4b4b4]" />

      {/* status bar */}
      <div className="h-[20px] shrink-0 flex items-center bg-[#f0f0f0] [&>div]:h-[17px] [&>div]:flex [&>div]:items-center [&>div]:shrink-0">
        <div className="w-[32px] justify-center">
          <svg width="15" height="15" viewBox="0 0 24 24" fill="none" stroke="#d8302f" strokeWidth="1.600"><path d="M1 1h22v17l-5 5H1zM6 1v8h12V1M6 23v-8h10v8" /></svg>
        </div>
        <div className="w-[241px] border-l border-[#c4c4c4] pl-[8px]">Página 1 de 1</div>
        <div className="w-[353px] border-l border-[#c4c4c4] pl-[8px] tracking-[-0.35px]">160 palabras, 981 caracteres</div>
        <div className="w-[46px] border-l border-[#c4c4c4]" />
        <div className="w-[342px] border-l border-[#c4c4c4] pl-[9px]">Estilo de página predeterminado</div>
        <div className="w-[259px] border-l border-[#c4c4c4] justify-center">Español (España)</div>
        <div className="w-[69px] border-l border-[#c4c4c4]" />
        <div className="w-[47px] border-l border-[#c4c4c4] pl-[10px] gap-[4px]">
          <div className="w-[17px] h-[11px] border border-[#2a8fd8]" />
          <svg width="8" height="15" viewBox="0 0 8 15" fill="none" stroke="#333"><path d="M0 .5h8M0 14.500h8M4 .5v14" /></svg>
        </div>
        <div className="w-[30px] border-l border-[#c4c4c4]" />
        <div className="w-[219px] border-l border-[#c4c4c4] justify-center">Tabla1:C1</div>
        <div className="w-[88px] border-l border-[#c4c4c4] pl-[8px] gap-[5px]">
          <div className="w-[12px] h-[17px] bg-[#0063b1]" />
          <svg width="25" height="17" viewBox="0 0 25 17" fill="none" stroke="#333"><path d="M.5.5h8l3 3v13H.5zM13.500.5h8l3 3v13h-11z" /></svg>
          <svg width="25" height="17" viewBox="0 0 25 17" fill="none" stroke="#333"><path d="M12.500 3.500v13H.5v-13l3-3h9zM12.500 3.500v13h12V.5h-12z" /></svg>
        </div>
        <div className="w-[145px] border-l border-[#c4c4c4] pl-[9px] gap-[5px]">
          <div className="w-[10px] h-[2px] bg-[#444]" />
          <div className="w-[98px] h-px bg-[#777] flex items-center relative">
            <div className="absolute left-[31px] w-[2px] h-[6px] bg-[#666]" />
            <div className="absolute left-[47px] w-[4px] h-[12px] bg-[#eee] border border-[#555]" />
          </div>
          <span className="text-[17px] leading-none text-[#222] font-bold">+</span>
        </div>
        <div className="flex-1 border-l border-[#c4c4c4] justify-center">110 %</div>
      </div>

      {/* taskbar */}
      <div className="h-[40px] shrink-0 flex items-center bg-gradient-to-r from-[#341e1c] via-[#3f2d28] to-[#3a1f20] text-white">
        <div className="w-[48px] h-full bg-[#2f1b19] flex items-center justify-center"><WinLogo /></div>
        <div className="w-[288px] h-full bg-[#f2f2f2] border-t border-x border-[#bbb] flex items-center pl-[12px] text-[#222] text-[15px]">
          <svg width="18" height="18" viewBox="0 0 18 18" fill="none" stroke="#222" strokeWidth="1.200"><circle cx="11" cy="7" r="5.500" /><path d="M7 11l-6 6" /></svg>
          <span className="ml-[10px]">Buscar</span>
        </div>
        <TaskI bar={false}><TaskView /></TaskI>
        <TaskI bar={false}><Edge /></TaskI>
        <TaskI><Explorer /></TaskI>
        <TaskI bar={false}><Store /></TaskI>
        <TaskI bar={false}><Outlook /></TaskI>
        <TaskI bar={false}><Xampp /></TaskI>
        <TaskI bar={false}><Mysql /></TaskI>
        <TaskI><Chrome /></TaskI>
        <TaskI><VsCode /></TaskI>
        <TaskI><VBox /></TaskI>
        <TaskI><Spiral /></TaskI>
        <TaskI><Cmd /></TaskI>
        <TaskI on><Writer /></TaskI>
        <div className="flex-1" />
        <div className="flex items-center h-full">
          <svg width="22" height="22" viewBox="0 0 22 22">
            <rect width="22" height="22" fill="#1f8a12" />
            <circle cx="11" cy="8" r="4.500" fill="#e8f5d8" />
            <rect x="9" y="11" width="4" height="3" fill="#e8f5d8" />
            <path d="M3 18h16" stroke="#c6e86a" strokeWidth="2" />
          </svg>
          <span className="ml-[10px] w-[147px] text-[14px] text-[#f2eeee] whitespace-nowrap">Ideas de la lista de se...</span>
          <svg width="14" height="8" viewBox="0 0 14 8" fill="none" stroke="#fff" className="ml-[19px]"><path d="M1 7l6-6 6 6" /></svg>
          <svg width="18" height="18" viewBox="0 0 18 18" fill="none" stroke="#fff" className="ml-[8px]">
            <path d="M.5 2.500h15v13H.5zM6 7a3 3 0 015-1M10 11a3 3 0 01-5 1" />
            <circle cx="14" cy="14" r="3.500" fill="#f7931e" stroke="none" />
          </svg>
          <svg width="16" height="16" viewBox="0 0 16 16" fill="none" stroke="#ddd" className="ml-[9px]"><path d="M1 15C2 8 8 2 15 1M4 15c1-5 5-9 11-10M7 15c1-3 3-5 8-6M10 15c0-2 2-3 5-3" strokeDasharray="2 1" /></svg>
          <svg width="16" height="14" viewBox="0 0 16 14" fill="none" stroke="#fff" className="ml-[6px]"><path d="M1 4.500h3L8 1v12L4 9.500H1zM11 5l4 4M15 5l-4 4" /></svg>
          <div className="w-[60px] ml-[9px] text-center text-[12px] leading-[17px] text-[#efe9e9]">11:01<br />20/01/2025</div>
          <svg width="18" height="18" viewBox="0 0 18 18" fill="none" stroke="#fff" className="ml-[16px] mr-[24px]"><path d="M1.500 1.500h15v12.500h-4l-3.500 3-3.500-3h-4z" /></svg>
        </div>
      </div>
    </div>
  );
}
